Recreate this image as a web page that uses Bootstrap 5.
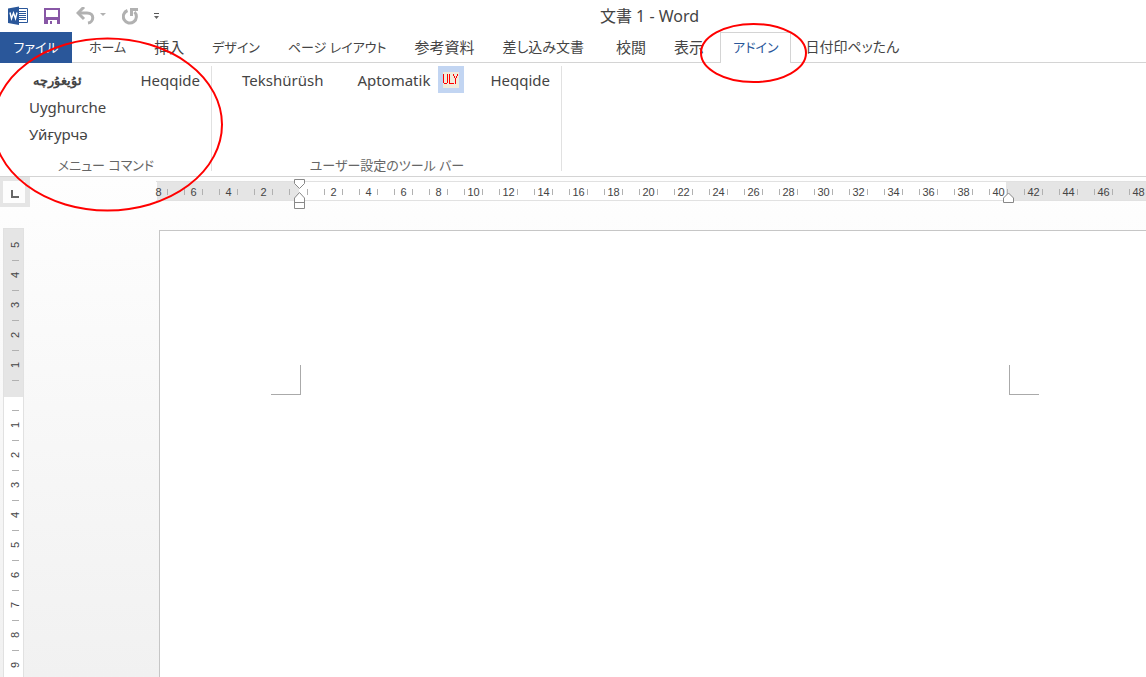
<!DOCTYPE html>
<html lang="ja">
<head>
<meta charset="utf-8">
<meta name="viewport" content="width=device-width, initial-scale=1">
<title>文書 1 - Word</title>
<link href="https://cdn.jsdelivr.net/npm/bootstrap@5.3.0/dist/css/bootstrap.min.css" rel="stylesheet">
<style>
body{font-family:"Noto Sans","Noto Sans CJK JP",sans-serif;font-size:15px;line-height:20px;color:#444;background:#fff;font-feature-settings:"palt"}
button{font:inherit;font-feature-settings:inherit;color:inherit;background:none;border:0;padding:0;white-space:nowrap}
.titlebar{height:32px}
.doc-title{font-size:16px}
.quick{width:161px;padding-left:8px}
.quick svg{flex-shrink:0}
.tabs{height:31px;border-bottom:1px solid #d4d4d4}
.tabs button{height:31px;padding:0 13px 2px;border:1px solid transparent;border-bottom:0}
.tabs .kana{font-size:13px}
.tabs .mixed{font-size:14px}
.tabs .file-tab{width:72px;padding:0 0 2px;background:#2a579a;color:#fff;margin-right:3px}
.tabs .active{color:#2a579a;background:#fff;border-color:#d4d4d4;padding:0 12px 2px;margin:0 0 0 2px}
.ribbon{height:114px;padding:3px 0 1px;border-bottom:1px solid #d4d4d4}
.group{position:relative}
.group::after{content:"";position:absolute;top:0;bottom:4px;right:0;border-right:1px solid #e1e1e1}
.group-a{width:212px}
.group-b{width:350px}
.cmd{height:27px;text-align:left}
.cmd-ug{font-size:13px;font-weight:600}
.group-a .cmds{padding-left:29px;padding-right:12px}
.group-b .cmds{padding-left:30px;padding-right:12px}
.group-label{color:#666;height:20px;font-size:13px}
.uly{width:26px;height:27px;background:#c2d5f2}
.workspace{background:linear-gradient(#fefefe,#f1f1f1)}
.corner{width:30px;height:30px;background:#e5e5e5;padding:4px 4px 4px 3px}
.corner span{background:#fdfdfd;width:22px;height:22px}
.hruler{margin-left:124px;margin-top:4px;height:20px}
.scale{height:20px;font:11px/20px "Liberation Sans",sans-serif;border:solid #e1e1e1;border-width:1px 0;border-image:linear-gradient(90deg,transparent 3px,#e1e1e1 3px) 1;background:linear-gradient(90deg,transparent 3px,#e5e5e5 3px,#e5e5e5 145px,#fff 145px,#fff 852px,#e5e5e5 852px)}
.scale ol{margin-left:-13px}
.scale li{flex:0 0 35px}
.scale li span{width:19px;height:6px;border:solid #b1b1b1;border-width:0 1px;line-height:6px;margin:7px auto 0}
.scale li:first-child span{border-left-color:transparent}
.marker{top:-3px}
.m-left{left:139px}
.m-right{left:848px}
.doc{margin-top:21px}
.vruler{width:21px;margin-left:3px;border:1px solid #e1e1e1;border-bottom:0;background:linear-gradient(#e5e5e5 168px,#fff 168px);font:11px/19px "Liberation Sans",sans-serif}
.vruler ol{padding-top:1px}
.vruler li{height:30px;position:relative}
.vruler li::after{content:"";width:7px;height:1px;background:#b1b1b1;display:block;position:absolute;bottom:-1px;left:8px}
.vruler li span{writing-mode:vertical-rl;transform:rotate(180deg);height:30px;width:19px;text-align:center;margin-left:2px}
.sheet{margin:2px 0 0 135px;border:1px solid #c6c6c6;border-width:1px 0 0 1px;background:#fff;padding:134px 107px 0 111px}
.crop{width:30px;height:30px;border:0 solid #aaa;border-bottom-width:1px}
.crop-l{border-right-width:1px}
.crop-r{border-left-width:1px}
</style>
<script src="https://cdn.jsdelivr.net/npm/bootstrap@5.3.0/dist/js/bootstrap.bundle.min.js"></script>
</head>
<body class="vh-100 d-flex flex-column overflow-hidden position-relative">
<header class="titlebar d-flex align-items-center flex-shrink-0">
  <div class="quick d-flex align-items-center flex-shrink-0">
    <svg width="20" height="20" viewBox="1 0 20 20" aria-label="Word"><path d="M11 2.500h9.500v14H11z" fill="#fff" stroke="#2a579a"/><path d="M12 5.500h7M12 7.500h7M12 9.500h7M12 11.500h7M12 13.500h7" stroke="#2a579a"/><path d="M1 2.500l11-2v18.500L1 17z" fill="#2a579a"/><path d="M3 6.500l1.500 6L6.500 7 8.500 12.500 10 6.500" fill="none" stroke="#fff" stroke-width="1.400"/></svg>
    <button class="d-flex ms-3" aria-label="上書き保存"><svg width="16" height="16" viewBox="0 0 16 16"><path d="M0 0h16v16H0z" fill="#8857a6"/><path d="M2 2h12v7H2zM4 12h9v4H8v-3H6v3H4z" fill="#fff"/></svg></button>
    <button class="d-flex ms-3" aria-label="元に戻す"><svg width="30" height="18" viewBox="0 0 30 18"><path d="M2 6h9c8 0 7 9 1 10" fill="none" stroke="#b1b1b1" stroke-width="3"/><path d="M8 0L2 6l6 6" fill="none" stroke="#b1b1b1" stroke-width="3"/><path d="M24 6h6l-3 3z" fill="#b1b1b1"/></svg></button>
    <button class="d-flex ms-3" aria-label="繰り返し"><svg width="16" height="18" viewBox="0 0 16 18"><path d="M5.500 3.500a6.500 6.500 0 1 0 7 1.500" fill="none" stroke="#b1b1b1" stroke-width="3"/><path d="M9.500 9V2.500H16" fill="none" stroke="#b1b1b1" stroke-width="3"/></svg></button>
    <button class="d-flex ms-3" aria-label="カスタマイズ"><svg width="5" height="8" viewBox="0 0 5 8"><path d="M0 1.500h5" stroke="#555"/><path d="M0 4h5L2.500 7z" fill="#666"/></svg></button>
  </div>
  <div class="doc-title flex-grow-1 text-center pe-2">文書 1 - Word</div>
</header>
<nav class="tabs d-flex flex-shrink-0">
  <button class="file-tab kana">ファイル</button>
  <button class="kana">ホーム</button><button>挿入</button><button class="kana">デザイン</button><button class="kana">ページ レイアウト</button><button>参考資料</button><button class="mixed me-1">差し込み文書</button><button>校閲</button><button>表示</button><button class="active kana">アドイン</button><button class="mixed">日付印ペッたん</button>
</nav>
<section class="ribbon d-flex flex-shrink-0">
  <div class="group group-a d-flex flex-column justify-content-between">
    <div class="cmds d-flex justify-content-between align-items-start">
      <div class="d-flex flex-column">
        <button class="cmd cmd-ug ps-1" lang="ug">ئۇيغۇرچە</button>
        <button class="cmd">Uyghurche</button>
        <button class="cmd">Уйғурчә</button>
      </div>
      <button class="cmd">Heqqide</button>
    </div>
    <div class="group-label text-center">メニュー コマンド</div>
  </div>
  <div class="group group-b d-flex flex-column justify-content-between">
    <div class="cmds d-flex justify-content-between align-items-start">
      <button class="cmd">Tekshürüsh</button>
      <div class="d-flex ms-2">
        <button class="cmd me-2">Aptomatik</button>
        <button class="uly d-flex align-items-center justify-content-center" aria-label="ULY"><svg width="18" height="18" viewBox="0 0 18 18" shape-rendering="crispEdges"><path d="M1 1h16v16H1z" fill="#f0ecdc"/><path d="M1.500 3v9M2 12.500h3M5.500 3v9M7.500 3v9M7 12.500h5M11.500 3v2M12.500 5v2M13.500 7v6M14.500 5v2M15.500 3v2" stroke="#f00" fill="none"/></svg></button>
      </div>
      <button class="cmd">Heqqide</button>
    </div>
    <div class="group-label text-center">ユーザー設定のツール バー</div>
  </div>
</section>
<main class="workspace flex-grow-1 d-flex flex-column overflow-hidden">
  <div class="d-flex flex-shrink-0">
    <div class="corner flex-shrink-0"><span class="d-block"><svg class="d-block" width="22" height="22" viewBox="0 0 22 22"><path d="M9 9v7h7" fill="none" stroke="#666" stroke-width="2"/></svg></span></div>
    <div class="hruler flex-grow-1 position-relative">
      <div class="scale overflow-hidden">
        <ol class="list-unstyled d-flex text-center mb-0">
          <li><span class="d-flex justify-content-center">8</span></li><li><span class="d-flex justify-content-center">6</span></li><li><span class="d-flex justify-content-center">4</span></li><li><span class="d-flex justify-content-center">2</span></li><li><span class="d-flex"></span></li>
          <li><span class="d-flex justify-content-center">2</span></li><li><span class="d-flex justify-content-center">4</span></li><li><span class="d-flex justify-content-center">6</span></li><li><span class="d-flex justify-content-center">8</span></li><li><span class="d-flex justify-content-center">10</span></li><li><span class="d-flex justify-content-center">12</span></li><li><span class="d-flex justify-content-center">14</span></li><li><span class="d-flex justify-content-center">16</span></li><li><span class="d-flex justify-content-center">18</span></li><li><span class="d-flex justify-content-center">20</span></li><li><span class="d-flex justify-content-center">22</span></li><li><span class="d-flex justify-content-center">24</span></li><li><span class="d-flex justify-content-center">26</span></li><li><span class="d-flex justify-content-center">28</span></li><li><span class="d-flex justify-content-center">30</span></li><li><span class="d-flex justify-content-center">32</span></li><li><span class="d-flex justify-content-center">34</span></li><li><span class="d-flex justify-content-center">36</span></li><li><span class="d-flex justify-content-center">38</span></li><li><span class="d-flex justify-content-center">40</span></li><li><span class="d-flex justify-content-center">42</span></li><li><span class="d-flex justify-content-center">44</span></li><li><span class="d-flex justify-content-center">46</span></li><li><span class="d-flex justify-content-center">48</span></li>
        </ol>
      </div>
      <svg class="marker m-left position-absolute" width="13" height="32" viewBox="0 0 13 32"><path d="M1.500 1.500h10v4l-5 5-5-5zM1.500 30.500V20l5-5.500 5 5.500v10.500zM1.500 24.500h10" fill="#fff" stroke="#888"/></svg>
      <svg class="marker m-right position-absolute" width="13" height="32" viewBox="0 0 13 32"><path d="M1.500 24.500V20l5-5 5 5v4.500z" fill="#fff" stroke="#888"/></svg>
    </div>
  </div>
  <div class="doc d-flex flex-grow-1 overflow-hidden">
    <div class="vruler flex-shrink-0">
      <ol class="list-unstyled mb-0">
        <li><span class="d-block">5</span></li><li><span class="d-block">4</span></li><li><span class="d-block">3</span></li><li><span class="d-block">2</span></li><li><span class="d-block">1</span></li><li></li>
        <li><span class="d-block">1</span></li><li><span class="d-block">2</span></li><li><span class="d-block">3</span></li><li><span class="d-block">4</span></li><li><span class="d-block">5</span></li><li><span class="d-block">6</span></li><li><span class="d-block">7</span></li><li><span class="d-block">8</span></li><li><span class="d-block">9</span></li>
      </ol>
    </div>
    <div class="sheet flex-grow-1 d-flex justify-content-between">
      <div class="crop crop-l"></div>
      <div class="crop crop-r"></div>
    </div>
  </div>
</main>
<svg class="position-absolute top-0 start-0 pe-none" width="820" height="220" viewBox="0 0 820 220" fill="none" stroke="#f00" stroke-width="2" aria-hidden="true"><ellipse cx="107.500" cy="124.500" rx="114.500" ry="86"/><ellipse cx="753.500" cy="53" rx="52.500" ry="29"/></svg>
</body>
</html>
